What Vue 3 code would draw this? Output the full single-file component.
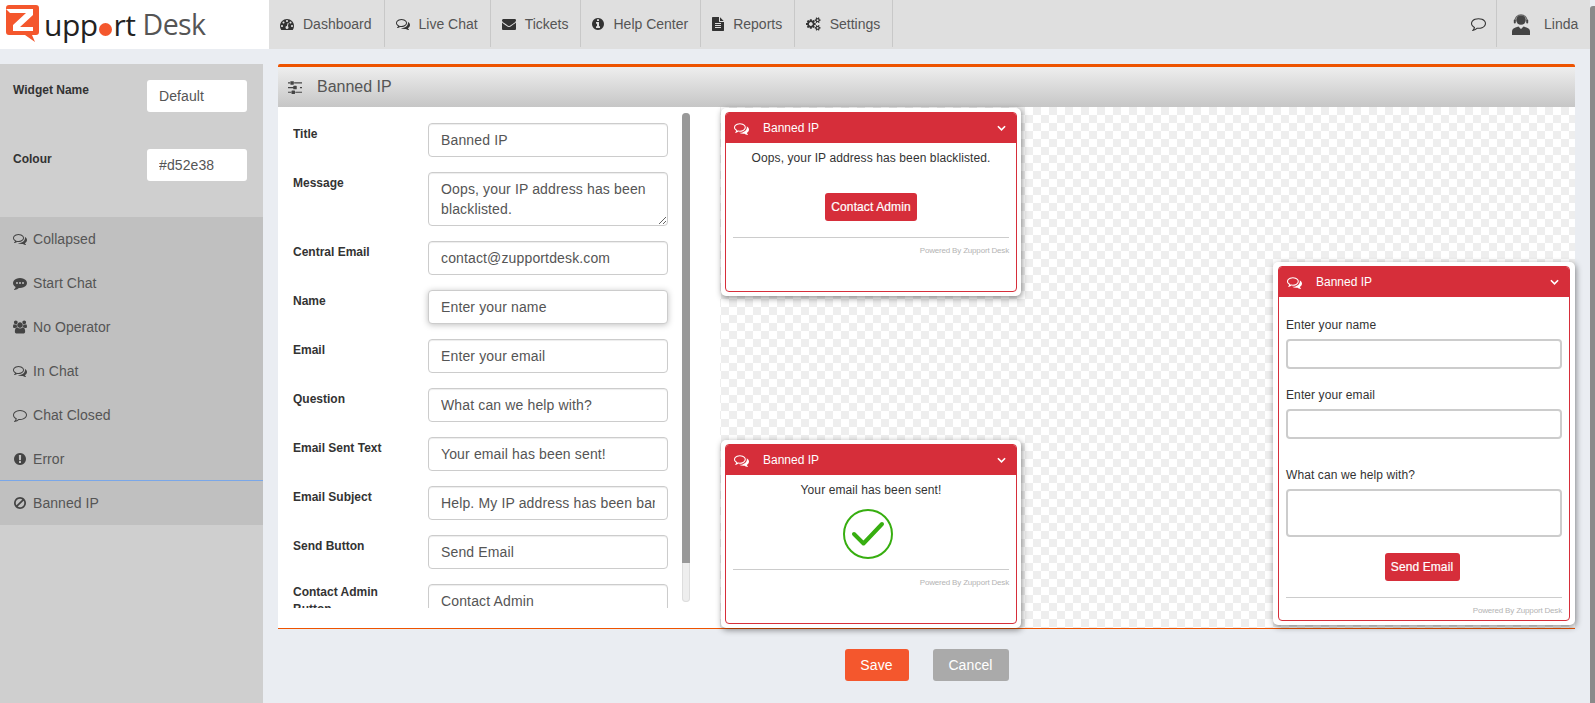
<script setup>
const d = {
  dash: 'M384 1152q0-53-37.5-90.5t-90.5-37.5-90.5 37.5-37.5 90.5 37.5 90.5 90.5 37.5 90.5-37.5 37.5-90.5zm192-448q0-53-37.5-90.5t-90.5-37.5-90.5 37.5-37.5 90.5 37.5 90.5 90.5 37.5 90.5-37.5 37.5-90.5zm428 481l101-382q6-26-7.5-48.5t-38.5-29.5-48 6.5-30 39.5l-101 382q-60 5-107 43.5t-63 98.5q-20 77 20 146t117 89 146-20 89-117q16-60-6-117t-72-91zm660-33q0-53-37.5-90.5t-90.5-37.5-90.5 37.5-37.5 90.5 37.5 90.5 90.5 37.5 90.5-37.5 37.5-90.5zm-640-640q0-53-37.5-90.5t-90.5-37.5-90.5 37.5-37.5 90.5 37.5 90.5 90.5 37.5 90.5-37.5 37.5-90.5zm448 192q0-53-37.5-90.5t-90.5-37.5-90.5 37.5-37.5 90.5 37.5 90.5 90.5 37.5 90.5-37.5 37.5-90.5zm320 448q0 261-141 483-19 29-54 29h-1402q-35 0-54-29-141-221-141-483 0-182 71-348t191-286 286-191 348-71 348 71 286 191 191 286 71 348z',
  comments: 'M704 384q-153 0-286 52t-211.5 141-78.5 191q0 82 53 158t149 132l97 56-35 84q34-20 62-39l44-31 53 10q78 14 153 14 153 0 286-52t211.5-141 78.5-191-78.5-191-211.5-141-286-52zm0-128q191 0 353.5 68.5t256.5 186.5 94 257-94 257-256.5 186.5-353.5 68.5q-86 0-176-16-124 88-278 128-36 9-86 16h-3q-11 0-20.5-8t-11.5-21q-1-3-1-6.5t.5-6.5 2-6l2.5-5 3.5-5.5 4-5 4.5-5 4-4.5q5-6 23-25t26-29.5 22.5-29 25-38.5 20.5-44q-124-72-195-177t-71-224q0-139 94-257t256.5-186.5 353.5-68.5zm822 1169q10 24 20.5 44t25 38.5 22.5 29 26 29.5 23 25q1 1 4 4.5t4.5 5 4 5 3.5 5.5l2.5 5 2 6 .5 6.5-1 6.5q-3 14-13 22t-22 7q-50-7-86-16-154-40-278-128-90 16-176 16-271 0-472-132 58 4 88 4 161 0 309-45t264-129q125-92 192-212t67-254q0-77-23-152 129 71 204 178t75 230q0 120-71 224.5t-195 176.5z',
  envelope: 'M1792 710v794q0 66-47 113t-113 47h-1472q-66 0-113-47t-47-113v-794q44 49 101 87 362 246 497 345 57 42 92.5 65.5t94.5 48 110 24.5h2q51 0 110-24.5t94.5-48 92.5-65.5q170-123 498-345 57-39 100-87zm0-294q0 79-49 151t-122 123q-376 261-468 325-10 7-42.5 30.5t-54 38-52 32.5-57.5 27-50 9h-2q-23 0-50-9t-57.5-27-52-32.5-54-38-42.5-30.5q-91-64-262-182.5t-205-142.5q-62-42-117-115.5t-55-136.5q0-78 41.5-130t118.5-52h1472q65 0 112.5 47t47.5 113z',
  info: 'M1152 1376v-160q0-14-9-23t-23-9h-96v-512q0-14-9-23t-23-9h-320q-14 0-23 9t-9 23v160q0 14 9 23t23 9h96v320h-96q-14 0-23 9t-9 23v160q0 14 9 23t23 9h448q14 0 23-9t9-23zm-128-896v-160q0-14-9-23t-23-9h-192q-14 0-23 9t-9 23v160q0 14 9 23t23 9h192q14 0 23-9t9-23zm640 416q0 209-103 385.5t-279.5 279.5-385.5 103-385.5-103-279.5-279.5-103-385.5 103-385.5 279.5-279.5 385.5-103 385.5 103 279.5 279.5 103 385.5z',
  file: 'M1596 476q14 14 28 36h-472v-472q22 14 36 28zm-476 164h544v1056q0 40-28 68t-68 28h-1344q-40 0-68-28t-28-68v-1600q0-40 28-68t68-28h800v544q0 40 28 68t68 28zm160 736v-64q0-14-9-23t-23-9h-704q-14 0-23 9t-9 23v64q0 14 9 23t23 9h704q14 0 23-9t9-23zm0-256v-64q0-14-9-23t-23-9h-704q-14 0-23 9t-9 23v64q0 14 9 23t23 9h704q14 0 23-9t9-23zm0-256v-64q0-14-9-23t-23-9h-704q-14 0-23 9t-9 23v64q0 14 9 23t23 9h704q14 0 23-9t9-23z',
  cogs: 'M896 896q0-106-75-181t-181-75-181 75-75 181 75 181 181 75 181-75 75-181zm768 512q0-52-38-90t-90-38-90 38-38 90q0 53 37.5 90.5t90.5 37.5 90.5-37.5 37.5-90.5zm0-1024q0-52-38-90t-90-38-90 38-38 90q0 53 37.5 90.5t90.5 37.5 90.5-37.5 37.5-90.5zm-384 421v185q0 10-7 19.5t-16 10.5l-155 24q-11 35-32 76 34 48 90 115 7 11 7 20 0 12-7 19-23 30-82.5 89.5t-78.5 59.5q-11 0-21-7l-115-90q-37 19-77 31-11 108-23 155-7 24-30 24h-186q-11 0-20-7.5t-10-17.5l-23-153q-34-10-75-31l-118 89q-7 7-20 7-11 0-21-8-144-133-144-160 0-9 7-19 10-14 41-53t47-61q-23-44-35-82l-152-24q-10-1-17-9.5t-7-19.5v-185q0-10 7-19.5t16-10.5l155-24q11-35 32-76-34-48-90-115-7-11-7-20 0-12 7-20 22-30 82-89t79-59q11 0 21 7l115 90q34-18 77-32 11-108 23-154 7-24 30-24h186q11 0 20 7.5t10 17.5l23 153q34 10 75 31l118-89q8-7 20-7 11 0 21 8 144 133 144 160 0 8-7 19-12 16-42 54t-45 60q23 48 34 82l152 23q10 2 17 10.5t7 19.5zm640 533v140q0 16-149 31-12 27-30 52 51 113 51 138 0 4-4 7-122 71-124 71-8 0-46-47t-52-68q-20 2-30 2t-30-2q-14 21-52 68t-46 47q-2 0-124-71-4-3-4-7 0-25 51-138-18-25-30-52-149-15-149-31v-140q0-16 149-31 13-29 30-52-51-113-51-138 0-4 4-7 4-2 35-20t59-34 30-16q8 0 46 46.5t52 67.5q20-2 30-2t30 2q51-71 92-112l6-2q4 0 124 70 4 3 4 7 0 25-51 138 17 23 30 52 149 15 149 31zm0-1024v140q0 16-149 31-12 27-30 52 51 113 51 138 0 4-4 7-122 71-124 71-8 0-46-47t-52-68q-20 2-30 2t-30-2q-14 21-52 68t-46 47q-2 0-124-71-4-3-4-7 0-25 51-138-18-25-30-52-149-15-149-31v-140q0-16 149-31 13-29 30-52-51-113-51-138 0-4 4-7 4-2 35-20t59-34 30-16q8 0 46 46.5t52 67.5q20-2 30-2t30 2q51-71 92-112l6-2q4 0 124 70 4 3 4 7 0 25-51 138 17 23 30 52 149 15 149 31z',
  commentO: 'M896 384q-204 0-381.5 69.5t-282 187.5-104.5 255q0 112 71.5 213.5t201.5 175.5l87 50-27 96q-24 91-70 172 152-63 275-171l43-38 57 6q69 8 130 8 204 0 381.5-69.5t282-187.5 104.5-255-104.5-255-282-187.5-381.5-69.5zm896 512q0 174-120 321.5t-326 233-450 85.5q-70 0-145-8-198 175-460 242-49 14-114 22h-5q-15 0-27-10.5t-16-27.5v-1q-3-4-.5-12t2-10 4.5-9.5l6-9 7-8.5 8-9q7-8 31-34.5t34.5-38 31-39.5 32.5-51 27-59 26-76q-157-89-247.5-220t-90.5-281q0-174 120-321.5t326-233 450-85.5 450 85.5 326 233 120 321.5z',
  commenting: 'M1792 896q0 174-120 321.5t-326 233-450 85.5q-70 0-145-8-198 175-460 242-49 14-114 22-17 2-30.5-9t-17.5-29v-1q-3-4-.5-12t2-10 4.5-9.5l6-9 7-8.5 8-9q7-8 31-34.5t34.5-38 31-39.5 32.5-51 27-59 26-76q-157-89-247.5-220t-90.5-281q0-174 120-321.5t326-233 450-85.5 450 85.5 326 233 120 321.5zM384 896a128 128 0 1 0 256 0a128 128 0 1 0-256 0zM768 896a128 128 0 1 0 256 0a128 128 0 1 0-256 0zM1152 896a128 128 0 1 0 256 0a128 128 0 1 0-256 0z',
  users: 'M593 896q-162 5-265 128h-134q-82 0-138-40.5t-56-118.5q0-353 124-353 6 0 43.5 21t97.5 42.5 119 21.5q67 0 133-23-5 37-5 66 0 139 81 256zm1071 637q0 120-73 189.5t-194 69.5h-874q-121 0-194-69.5t-73-189.5q0-53 3.5-103.5t14-109 26.5-108.5 43-97.5 62-81 85.5-53.5 111.5-20q10 0 43 21.5t73 48 107 48 135 21.5 135-21.5 107-48 73-48 43-21.5q61 0 111.5 20t85.5 53.5 62 81 43 97.5 26.5 108.5 14 109 3.5 103.5zm-1024-1277q0 106-75 181t-181 75-181-75-75-181 75-181 181-75 181 75 75 181zm704 384q0 159-112.5 271.5t-271.5 112.5-271.5-112.5-112.5-271.5 112.5-271.5 271.5-112.5 271.5 112.5 112.5 271.5zm576 225q0 78-56 118.5t-138 40.5h-134q-103-123-265-128 81-117 81-256 0-29-5-66 66 23 133 23 59 0 119-21.5t97.5-42.5 43.5-21q124 0 124 353zm-128-609q0 106-75 181t-181 75-181-75-75-181 75-181 181-75 181 75 75 181z',
  error: 'M896 128q209 0 385 103t279 279 103 386-103 385.5-279 279.5-385 103-385.5-103-279.5-279.5-103-385.5 103-386 279.5-279 385.5-103zm128 1247v-190q0-14-9-23.5t-22-9.5h-192q-13 0-23 10t-10 23v190q0 13 10 23t23 10h192q13 0 22-9.5t9-23.5zm-2-344l18-621q0-12-10-18-10-8-24-8h-220q-14 0-24 8-10 6-10 18l17 621q0 10 10 17.5t24 7.5h185q14 0 23.5-7.5t10.5-17.5z',
  ban: 'M1440 893q0-161-87-295l-754 753q137 89 297 89 111 0 211.5-43.5t173.5-116.5 116-174.5 43-212.5zm-999 299l755-754q-135-91-300-91-148 0-273 73t-198 199-73 274q0 162 89 299zm1223-299q0 157-61 300t-163.5 246-245 164-298.5 61-298.5-61-245-164-163.5-246-61-300 61-299.5 163.5-245.5 245-164 298.5-61 298.5 61 245 164 163.5 245.5 61 299.5z',
  sliders: 'M480 1408v128h-352v-128h352zm352-128q26 0 45 19t19 45v256q0 26-19 45t-45 19h-256q-26 0-45-19t-19-45v-256q0-26 19-45t45-19h256zm160-384v128h-864v-128h864zm-640-512v128h-224v-128h224zm1312 1024v128h-736v-128h736zm-960-1152q26 0 45 19t19 45v256q0 26-19 45t-45 19h-256q-26 0-45-19t-19-45v-256q0-26 19-45t45-19h256zm320 512q26 0 45 19t19 45v256q0 26-19 45t-45 19h-256q-26 0-45-19t-19-45v-256q0-26 19-45t45-19h256zm640 128v128h-224v-128h224zm0-512v128h-864v-128h864z'
}
const nav = [
  { label: 'Dashboard', icon: d.dash, box: '0 0 1792 1792', cls: 'w14' },
  { label: 'Live Chat', icon: d.comments, box: '0 0 1792 1792', cls: 'w14' },
  { label: 'Tickets', icon: d.envelope, box: '0 0 1792 1792', cls: 'w14' },
  { label: 'Help Center', icon: d.info, box: '128 0 1536 1792', cls: 'w12' },
  { label: 'Reports', icon: d.file, box: '128 0 1536 1792', cls: 'w12' },
  { label: 'Settings', icon: d.cogs, box: '0 0 1920 1792', cls: 'w15' }
]
const menu = [
  { label: 'Collapsed', icon: d.comments, box: '0 0 1792 1792' },
  { label: 'Start Chat', icon: d.commenting, box: '0 0 1792 1792' },
  { label: 'No Operator', icon: d.users, box: '0 0 1920 1792' },
  { label: 'In Chat', icon: d.comments, box: '0 0 1792 1792' },
  { label: 'Chat Closed', icon: d.commentO, box: '0 0 1792 1792' },
  { label: 'Error', icon: d.error, box: '128 0 1536 1792' },
  { label: 'Banned IP', icon: d.ban, box: '128 0 1536 1792', active: true }
]
const fields = [
  { label: 'Title', value: 'Banned IP' },
  { label: 'Message', value: 'Oops, your IP address has been blacklisted.', area: true },
  { label: 'Central Email', value: 'contact@zupportdesk.com' },
  { label: 'Name', value: 'Enter your name', focus: true },
  { label: 'Email', value: 'Enter your email' },
  { label: 'Question', value: 'What can we help with?' },
  { label: 'Email Sent Text', value: 'Your email has been sent!' },
  { label: 'Email Subject', value: 'Help. My IP address has been banned' },
  { label: 'Send Button', value: 'Send Email' },
  { label: 'Contact Admin Button', value: 'Contact Admin', tall: true }
]
</script>

<template>
  <div class="page">
    <header class="topbar">
      <div class="logo">
        <svg class="logo-mark" viewBox="0 0 34 38" width="34" height="38">
          <path class="logo-orange" d="M3 0h27q3 0 3 3v24q0 3-3 3h-4l3 7-10-7H3q-3 0-3-3V3q0-3 3-3z" />
          <path class="logo-white" d="M0 4h27v6L14 22h13v4H7v-6L20 8H4z" />
        </svg>
        <span class="logo-text">upp<i class="logo-dot"></i>rt</span>
        <span class="logo-desk">Desk</span>
      </div>
      <nav class="nav">
        <a v-for="n in nav" :key="n.label" class="nav-item">
          <svg :class="['nav-icon', n.cls]" :viewBox="n.box"><path :d="n.icon" /></svg>
          <span>{{ n.label }}</span>
        </a>
        <div class="nav-right">
          <div class="nav-chat">
            <svg class="chat-icon" viewBox="0 0 1792 1792"><path :d="d.commentO" /></svg>
          </div>
          <div class="nav-user">
            <svg class="avatar" viewBox="0 0 18 22" width="18" height="22">
              <circle cx="9" cy="7" r="4.800" />
              <path d="M2.800 8a6.200 6.200 0 0 1 12.400 0" class="headset" />
              <rect x="1.800" y="6.500" width="2" height="4" rx="1" />
              <rect x="14.200" y="6.500" width="2" height="4" rx="1" />
              <path d="M0 22v-3.500q0-3 3.500-4L6.500 13.500 9 16l2.500-2.500 3 1q3.500 1 3.500 4V22z" />
              <path class="collar" d="M7.300 13.800L9 15.500l1.700-1.700L9 13z" />
            </svg>
            <span>Linda</span>
          </div>
        </div>
      </nav>
    </header>

    <div class="main">
      <aside class="sidebar">
        <div class="side-fields">
          <label class="side-row"><span>Widget Name</span><input class="side-input" value="Default" readonly /></label>
          <label class="side-row"><span>Colour</span><input class="side-input" value="#d52e38" readonly /></label>
        </div>
        <ul class="menu">
          <li v-for="m in menu" :key="m.label" :class="['menu-item', { active: m.active }]">
            <span class="menu-icon"><svg :viewBox="m.box"><path :d="m.icon" fill-rule="evenodd" /></svg></span>
            {{ m.label }}
          </li>
        </ul>
      </aside>

      <div class="content">
        <section class="panel">
          <div class="panel-head">
            <svg class="head-icon" viewBox="128 128 1536 1536"><path :d="d.sliders" /></svg>
            <span>Banned IP</span>
          </div>
          <div class="panel-body">
            <div class="form-pane">
              <div class="form-scroll">
                <div v-for="f in fields" :key="f.label" class="form-row">
                  <div :class="['form-label', { tall: f.tall }]">{{ f.label }}</div>
                  <textarea v-if="f.area" class="form-input area" readonly :value="f.value"></textarea>
                  <input v-else :class="['form-input', { focus: f.focus }]" readonly :value="f.value" />
                </div>
              </div>
              <div class="vscroll"><div class="vthumb"></div></div>
            </div>

            <div class="canvas">
              <div class="widget w-one">
                <div class="w-inner">
                  <div class="w-head">
                    <svg class="w-chat" viewBox="0 0 1792 1792"><path :d="d.comments" /></svg>
                    <span>Banned IP</span>
                    <svg class="w-chev" viewBox="0 0 10 6"><path d="M1 1l4 4 4-4" /></svg>
                  </div>
                  <div class="w-body">
                    <p class="w-msg">Oops, your IP address has been blacklisted.</p>
                    <button class="w-btn admin">Contact Admin</button>
                    <div class="w-foot">Powered By Zupport Desk</div>
                  </div>
                </div>
              </div>

              <div class="widget w-two">
                <div class="w-inner">
                  <div class="w-head">
                    <svg class="w-chat" viewBox="0 0 1792 1792"><path :d="d.comments" /></svg>
                    <span>Banned IP</span>
                    <svg class="w-chev" viewBox="0 0 10 6"><path d="M1 1l4 4 4-4" /></svg>
                  </div>
                  <div class="w-body">
                    <p class="w-msg">Your email has been sent!</p>
                    <svg class="check" viewBox="0 0 50 50" width="50" height="50">
                      <circle cx="25" cy="25" r="24" />
                      <path d="M11 25l9.500 9.500L39 15" />
                    </svg>
                    <div class="w-foot two">Powered By Zupport Desk</div>
                  </div>
                </div>
              </div>

              <div class="widget w-three">
                <div class="w-inner">
                  <div class="w-head">
                    <svg class="w-chat" viewBox="0 0 1792 1792"><path :d="d.comments" /></svg>
                    <span>Banned IP</span>
                    <svg class="w-chev" viewBox="0 0 10 6"><path d="M1 1l4 4 4-4" /></svg>
                  </div>
                  <div class="w-body form">
                    <div class="w-label">Enter your name</div>
                    <div class="w-field"></div>
                    <div class="w-label">Enter your email</div>
                    <div class="w-field"></div>
                    <div class="w-label gap">What can we help with?</div>
                    <div class="w-field big"></div>
                    <button class="w-btn send">Send Email</button>
                    <div class="w-foot three">Powered By Zupport Desk</div>
                  </div>
                </div>
              </div>
            </div>
          </div>
        </section>
        <div class="actions">
          <button class="act save">Save</button>
          <button class="act cancel">Cancel</button>
        </div>
      </div>
    </div>
    <div class="page-scroll"></div>
  </div>
</template>

<style>
html, body { margin: 0; padding: 0; overflow: hidden; }
</style>

<style scoped>
.page {
  position: relative;
  width: 1595px;
  height: 703px;
  overflow: hidden;
  background: #eaedf2;
  font-family: "Liberation Sans", Arial, sans-serif;
  font-size: 14px;
  color: #555;
}
.topbar { display: flex; height: 49px; width: 1590px; }
.logo {
  width: 269px;
  background: #fff;
  display: flex;
  align-items: center;
  padding-left: 6px;
  box-sizing: border-box;
  font-family: "Open Sans", sans-serif;
  font-size: 30px;
  letter-spacing: -0.5px;
  position: relative;
}
.logo-mark { flex: none; margin: -1px 4px 0 0; }
.logo-orange { fill: #f4572d; }
.logo-white { fill: #fff; }
.logo-text { color: #222; line-height: 1; }
.logo-dot {
  display: inline-block;
  width: 13px;
  height: 13px;
  border-radius: 50%;
  background: #f4572d;
  margin: 0 1.500px;
}
.logo-desk { color: #555; margin-left: 7px; line-height: 1; font-size: 28.500px; letter-spacing: -0.6px; }
.nav { flex: 1; display: flex; background: #dfdfdf; height: 49px; }
.nav-item {
  display: flex;
  align-items: center;
  height: 47px;
  padding: 0 12px 0 11px;
  border-right: 1px solid #c8c8c8;
  white-space: nowrap;
}
.nav-icon { height: 14px; margin-right: 9px; fill: #333; flex: none; }
.w14 { width: 14px; }
.w12 { width: 12px; }
.w15 { width: 14.500px; }
.nav-right { margin-left: auto; display: flex; }
.nav-chat {
  display: flex;
  align-items: center;
  height: 47px;
  width: 25px;
  border-right: 1px solid #c8c8c8;
}
.chat-icon { width: 15px; height: 15px; fill: #333; flex: none; }
.nav-user {
  display: flex;
  align-items: center;
  height: 47px;
  width: 93px;
  padding-left: 15px;
  box-sizing: border-box;
}
.avatar { fill: #444; margin-right: 14px; flex: none; }
.headset { fill: none; stroke: #666; stroke-width: 1.200; }
.collar { fill: #dfdfdf; }

.main { display: flex; height: 654px; }
.sidebar { width: 263px; margin-top: 15px; background: #cfcfcf; flex: none; }
.side-fields { height: 153px; padding: 16px 16px 0 13px; box-sizing: border-box; }
.side-row {
  display: flex;
  justify-content: space-between;
  height: 69px;
  font-size: 12px;
  font-weight: bold;
  color: #333;
  line-height: 17px;
}
.side-row span { padding-top: 2px; }
.side-input {
  width: 100px;
  height: 32px;
  box-sizing: border-box;
  border: 0;
  border-radius: 3px;
  background: #fff;
  padding: 0 12px;
  font: 14px "Liberation Sans", Arial, sans-serif;
  letter-spacing: .1px;
  color: #555;
  outline: 0;
}
.menu { list-style: none; margin: 0; padding: 0; background: #c0c0c0; }
.menu-item {
  display: flex;
  align-items: center;
  height: 44px;
  padding-left: 13px;
  box-sizing: border-box;
  letter-spacing: .05px;
}
.menu-item.active { border-top: 1px solid #7aa7e8; margin-top: -1px; height: 45px; }
.menu-icon { width: 20px; display: flex; }
.menu-icon svg { height: 14px; width: 14px; fill: #444; }

.content { flex: none; width: 1297px; margin-left: 15px; }
.panel {
  margin-top: 15px;
  height: 565px;
  background: #fff;
  border-top: 3px solid #ee5300;
  border-bottom: 1px solid #ee5300;
  border-radius: 2px 2px 0 0;
  display: flex;
  flex-direction: column;
  box-sizing: border-box;
}
.panel-head {
  height: 40px;
  flex: none;
  display: flex;
  align-items: center;
  padding-left: 10px;
  background: linear-gradient(#eeeeee, #c6c6c6);
  font-size: 16px;
}
.head-icon { width: 14px; height: 14px; margin-right: 15px; fill: #444; }
.panel-body { flex: 1; display: flex; min-height: 0; }
.form-pane {
  position: relative;
  width: 442px;
  flex: none;
  box-sizing: border-box;
  padding: 16px 0 0 15px;
}
.form-scroll { height: 485px; overflow: hidden; }
.form-row { display: flex; margin-bottom: 15px; }
.form-label {
  width: 135px;
  flex: none;
  padding-top: 3px;
  font-size: 12px;
  font-weight: bold;
  line-height: 17px;
  color: #333;
  box-sizing: border-box;
  padding-right: 20px;
}
.form-label.tall { padding-top: 0; }
.form-input {
  width: 240px;
  height: 34px;
  flex: none;
  box-sizing: border-box;
  border: 1px solid #ccc;
  border-radius: 4px;
  padding: 6px 12px;
  font: 14px/20px "Liberation Sans", Arial, sans-serif;
  letter-spacing: .14px;
  color: #555;
  background: #fff;
  outline: 0;
  box-shadow: inset 0 1px 1px rgba(0, 0, 0, .075);
  margin: 0;
}
.form-input.area { height: 54px; display: block; }
.form-input.focus { box-shadow: 0 1px 6px rgba(0, 0, 0, .25); }
.vscroll {
  position: absolute;
  left: 404px;
  top: 6px;
  width: 8px;
  height: 489px;
  background: #eee;
  border-radius: 4px;
  box-shadow: inset 0 0 0 1px #ddd;
}
.vthumb { height: 450px; background: #999; border-radius: 4px 4px 0 0; }

.canvas {
  position: relative;
  flex: 1;
  background-color: #fff;
  background-image: conic-gradient(#eee 25%, #fff 0 50%, #eee 0 75%, #fff 0);
  background-size: 16px 16px;
  background-position: 1px 0;
}
.widget {
  position: absolute;
  box-sizing: border-box;
  padding: 4px;
  background: #fff;
  border-radius: 5px;
  box-shadow: 1px 2px 6px rgba(0, 0, 0, .45);
}
.w-one { left: 1px; top: 1px; width: 300px; height: 188px; }
.w-two { left: 1px; top: 333px; width: 300px; height: 188px; }
.w-three { right: 0; top: 155px; width: 302px; height: 363px; padding: 4px 5px; }
.w-inner {
  height: 100%;
  box-sizing: border-box;
  border: 1px solid #d62e3a;
  border-radius: 4px;
  display: flex;
  flex-direction: column;
  overflow: hidden;
}
.w-head {
  height: 30px;
  flex: none;
  background: #d62e3a;
  color: #fff;
  display: flex;
  align-items: center;
  padding-left: 8px;
  font-size: 12px;
}
.w-chat { width: 15px; height: 15px; fill: #fff; margin-right: 14px; flex: none; }
.w-chev { width: 9px; height: 6px; margin-left: auto; margin-right: 10px; fill: none; stroke: #fff; stroke-width: 1.8; }
.w-body {
  flex: 1;
  padding: 0 7px;
  display: flex;
  flex-direction: column;
  align-items: center;
  color: #333;
  font-size: 12px;
  letter-spacing: .1px;
}
.w-msg { margin: 7px 0 0; line-height: 17px; white-space: nowrap; }
.w-btn {
  border: 0;
  border-radius: 3px;
  background: #d62e3a;
  color: #fff;
  font: 12px "Liberation Sans", Arial, sans-serif;
  letter-spacing: .1px;
  -webkit-text-stroke: .2px #fff;
  height: 28px;
  padding: 0;
  flex: none;
}
.w-btn.admin { width: 92px; margin-top: 26px; }
.w-foot {
  align-self: stretch;
  border-top: 1px solid #ccc;
  margin-top: 16px;
  padding-top: 7px;
  text-align: right;
  font-size: 8px;
  letter-spacing: -.18px;
  line-height: 12px;
  color: #b4b4b4;
}
.check { margin-top: 10px; flex: none; margin-right: 7px; }
.check circle { fill: none; stroke: #37ae10; stroke-width: 2; }
.check path { fill: none; stroke: #37ae10; stroke-width: 4; stroke-linecap: round; stroke-linejoin: round; }
.w-foot.two { margin-top: 10px; }
.w-body.form { align-items: stretch; padding-top: 20px; }
.w-label { line-height: 17px; margin-bottom: 5px; }
.w-label.gap { margin-top: 10px; }
.w-field {
  height: 30px;
  box-sizing: border-box;
  border: 2px solid #ccc;
  border-radius: 4px;
  margin-bottom: 18px;
  background: #fff;
  flex: none;
}
.w-field.big { height: 48px; margin-bottom: 0; }
.w-btn.send { width: 75px; margin-top: 16px; align-self: center; margin-right: 4px; }
.w-foot.three { margin-top: 16px; }

.actions { display: flex; justify-content: center; gap: 24px; margin-top: 20px; }
.act {
  height: 32px;
  border: 0;
  border-radius: 3px;
  color: #fff;
  font: 14px "Liberation Sans", Arial, sans-serif;
  letter-spacing: .1px;
  padding: 0;
}
.save { width: 64px; background: #f4572d; }
.cancel { width: 76px; background: #aaa; }
.page-scroll {
  position: absolute;
  right: 0;
  top: 6px;
  bottom: 0;
  width: 5px;
  background: #8a8a8a;
  border-radius: 3px 0 0 0;
}
</style>
